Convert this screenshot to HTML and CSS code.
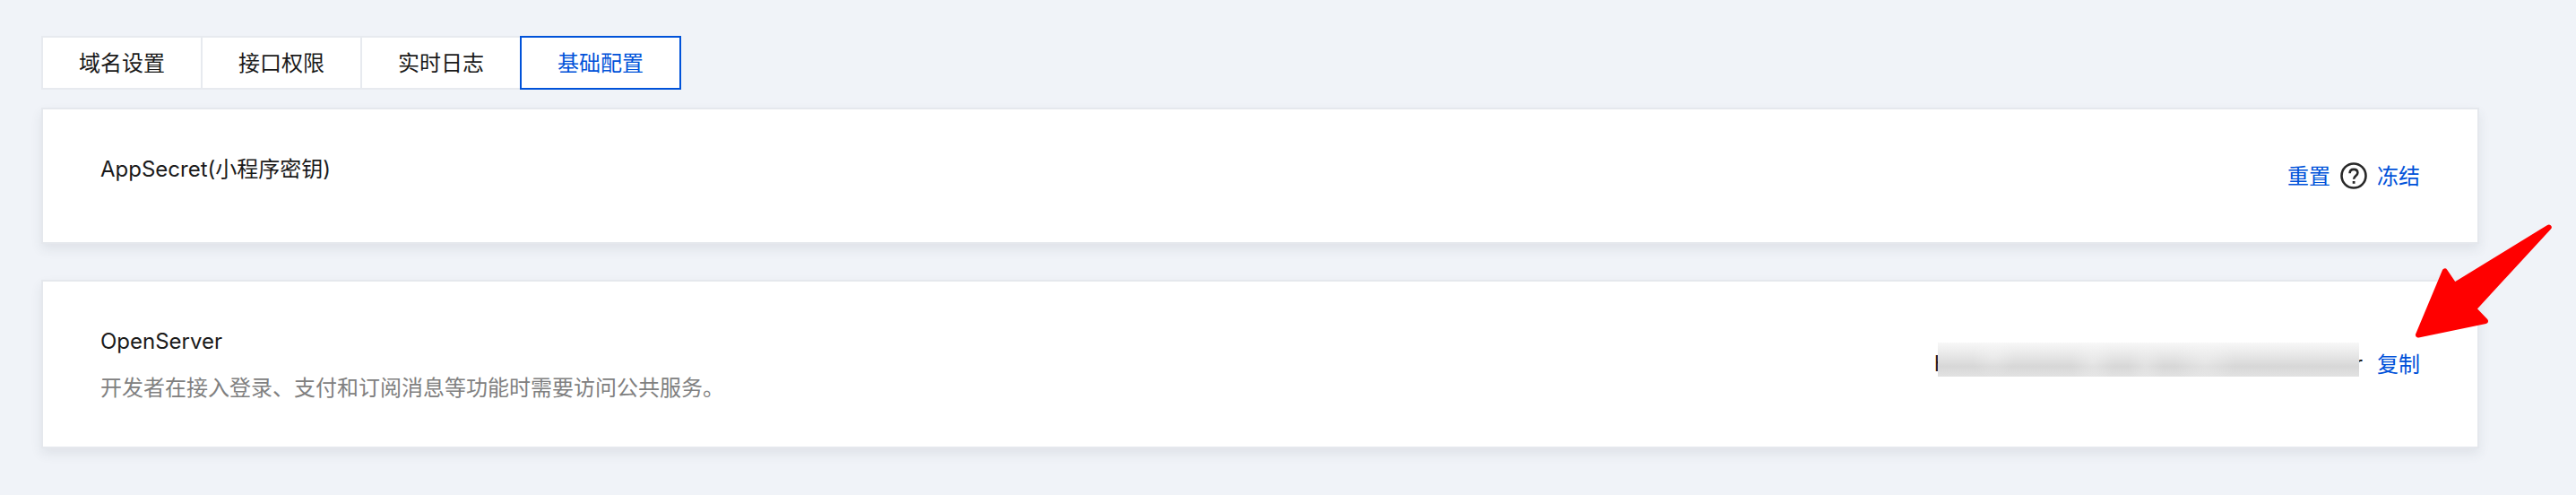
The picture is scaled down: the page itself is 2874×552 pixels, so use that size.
FILE: index.html
```html
<!DOCTYPE html>
<html lang="zh-CN">
<head>
    <meta charset="UTF-8">
    <meta name="viewport" content="width=device-width, initial-scale=1.0">
    <title>基础配置</title>
    <link rel="stylesheet" href="styles.css">
</head>
<body>
    <div class="page">
        <div class="tabs">
            <button type="button" class="tab">域名设置</button>
            <button type="button" class="tab">接口权限</button>
            <button type="button" class="tab">实时日志</button>
            <button type="button" class="tab active">基础配置</button>
        </div>

        <div class="card card-secret">
            <div class="info">
                <h3>AppSecret(小程序密钥)</h3>
            </div>
            <div class="actions">
                <a class="link">重置</a>
                <svg class="help" width="30" height="30" viewBox="0 0 30 30" fill="none" stroke="#292929">
                    <circle cx="15" cy="15" r="13.5" stroke-width="2.6"/>
                    <path d="M10.6 12.2C10.6 9.5 12.5 7.900 15.100 7.900s4.300 1.500 4.300 3.900c0 3-4.300 3.300-4.300 6.900" stroke-width="2.6"/>
                    <path d="M15.100 21v2.800" stroke-width="2.8"/>
                </svg>
                <a class="link">冻结</a>
            </div>
        </div>

        <div class="card card-server">
            <div class="info">
                <h3>OpenServer</h3>
                <p>开发者在接入登录、支付和订阅消息等功能时需要访问公共服务。</p>
            </div>
            <div class="actions">
                <div class="address">
                    <span>h</span>
                    <span>r</span>
                    <div class="mask"></div>
                </div>
                <a class="link">复制</a>
            </div>
        </div>
    </div>

    <svg class="arrow" width="160" height="134" viewBox="0 0 160 134">
        <path d="M151.700 7.500L46.400 72.100L35.700 56.500L6 127.500L81 112L67.800 98.400Z" fill="#ff0000"/>
    </svg>
</body>
</html>
```

FILE: styles.css
```css
* {
    margin: 0;
    padding: 0;
    box-sizing: border-box;
}

body {
    height: 552px;
    background-color: #f0f3f8;
    color: #1a1a1a;
    font-family: Inter, "Noto Sans CJK SC", sans-serif;
    font-size: 24px;
    line-height: 36px;
    overflow: hidden;
}

.page {
    width: 2766px;
    padding: 40px 0 0 46px;
}

/* tabs */
.tabs {
    display: flex;
    margin-bottom: 20px;
}

.tab {
    width: 180px;
    height: 60px;
    padding-top: 2px;
    border: 2px solid #e7eaef;
    background-color: white;
    color: #1a1a1a;
    font: inherit;
    cursor: pointer;
}

.tab + .tab {
    margin-left: -2px;
}

.tab.active {
    border-color: #0052d9;
    color: #0052d9;
}

/* cards */
.card {
    display: flex;
    justify-content: space-between;
    align-items: center;
    margin-bottom: 40px;
    padding: 0 64px;
    border: 2px solid #e5e8ed;
    background-color: white;
    box-shadow: 0 6px 12px rgba(54, 70, 80, 0.09);
}

.card-secret {
    height: 152px;
}

.card-server {
    height: 188px;
}

.info {
    align-self: flex-start;
    padding-top: 49px;
}

.info h3 {
    font-size: 24px;
    font-weight: 400;
}

.info p {
    margin-top: 16px;
    color: #808080;
}

.actions {
    display: flex;
    align-items: center;
}

.link {
    padding-top: 2px;
    color: #0052d9;
    cursor: pointer;
}

.help {
    margin: 0 11px;
}

.address {
    position: relative;
    display: flex;
    justify-content: space-between;
    width: 478px;
    margin-right: 16px;
}

.mask {
    position: absolute;
    top: -6px;
    left: 4px;
    width: 470px;
    height: 38px;
    background:
        radial-gradient(24px 30px at 173px 22px, rgba(255, 255, 255, 0.3), transparent),
        radial-gradient(20px 26px at 232px 26px, rgba(255, 255, 255, 0.25), transparent),
        radial-gradient(34px 30px at 298px 22px, rgba(255, 255, 255, 0.3), transparent),
        radial-gradient(24px 24px at 62px 16px, rgba(255, 255, 255, 0.25), transparent),
        linear-gradient(#f8f8f8, #e8e8e8 35%, #d7d7d7 70%, #e2e2e2);
}

.arrow {
    position: absolute;
    top: 246px;
    left: 2692px;
}

.arrow path {
    stroke: #ff0000;
    stroke-width: 6;
    stroke-linejoin: round;
}
```
